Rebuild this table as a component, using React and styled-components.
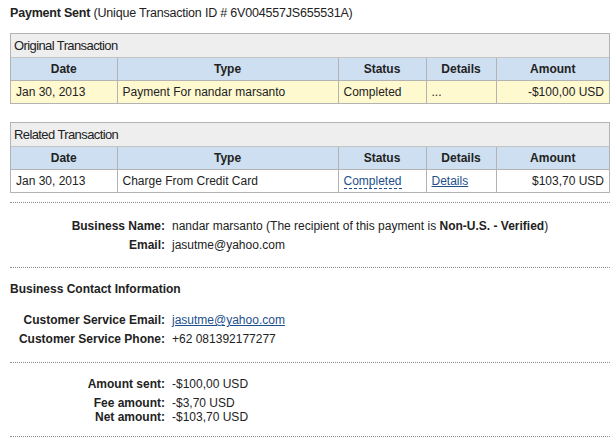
import React from "react";
import styled, { createGlobalStyle } from "styled-components";

const GlobalStyle = createGlobalStyle`
  body {
    margin: 0;
    background: #ffffff;
    font-family: "Liberation Sans", Arial, sans-serif;
    color: #222;
  }
`;

const Page = styled.div`
  width: 600px;
  padding: 6px 0 0 10px;
  font-size: 12px;
`;

const Title = styled.div`
  font-size: 12.5px;
  letter-spacing: -0.2px;
  line-height: 15px;
  height: 15px;
  margin-bottom: 12px;
  b {
    font-weight: bold;
  }
`;

const Box = styled.div`
  border: 1px solid #b3b3b3;
  margin-bottom: ${p => p.$gap || 0}px;
`;

const Caption = styled.div`
  background: #eeeeee;
  height: 23px;
  line-height: 23px;
  padding-left: 3px;
  font-size: 13px;
  letter-spacing: -0.6px;
  border-bottom: 1px solid #c4c4c4;
`;

const Table = styled.table`
  width: 100%;
  border-collapse: collapse;
  table-layout: fixed;
  font-size: 12px;
`;

const Th = styled.th`
  background: #cddff0;
  height: 22px;
  font-weight: bold;
  text-align: center;
  border-left: 1px solid #b3b3b3;
  border-bottom: 1px solid #b3b3b3;
  padding: 0;
  &:first-child {
    border-left: none;
  }
`;

const Td = styled.td`
  background: ${p => (p.$hl ? "#fff9d0" : "#ffffff")};
  height: 22px;
  padding: 0 5px;
  text-align: ${p => (p.$right ? "right" : "left")};
  border-left: 1px solid #b3b3b3;
  white-space: nowrap;
  &:first-child {
    border-left: none;
  }
`;

const Link = styled.a`
  color: #1c4f8c;
  text-decoration: underline;
`;

const StatusLink = styled.span`
  color: #1c4f8c;
  border-bottom: 1px dashed #1c4f8c;
`;

const Divider = styled.div`
  border-top: 1px dotted #8c8c8c;
  height: 0;
  margin: ${p => p.$m || "0"};
`;

const InfoGrid = styled.div`
  display: grid;
  grid-template-columns: 155px 1fr;
  column-gap: 7px;
  row-gap: ${p => p.$rowGap || 5}px;
  line-height: 14px;
  margin-top: ${p => p.$top || 0}px;
`;

const Label = styled.div`
  font-weight: bold;
  text-align: right;
  margin-top: ${p => p.$shift || 0}px;
`;

const Value = styled.div`
  margin-top: ${p => p.$shift || 0}px;
`;

const SectionTitle = styled.div`
  font-weight: bold;
  line-height: 14px;
`;

function TxTable({ title, row, highlight, gap }) {
  return (
    <Box $gap={gap}>
      <Caption>{title}</Caption>
      <Table>
        <colgroup>
          <col style={{ width: 106 }} />
          <col style={{ width: 221 }} />
          <col style={{ width: 88 }} />
          <col style={{ width: 70 }} />
          <col />
        </colgroup>
        <thead>
          <tr>
            <Th>Date</Th>
            <Th>Type</Th>
            <Th>Status</Th>
            <Th>Details</Th>
            <Th>Amount</Th>
          </tr>
        </thead>
        <tbody>
          <tr>
            <Td $hl={highlight}>{row.date}</Td>
            <Td $hl={highlight}>{row.type}</Td>
            <Td $hl={highlight}>{row.status}</Td>
            <Td $hl={highlight}>{row.details}</Td>
            <Td $hl={highlight} $right>
              {row.amount}
            </Td>
          </tr>
        </tbody>
      </Table>
    </Box>
  );
}

export default function App() {
  return (
    <>
      <GlobalStyle />
      <Page>
        <Title>
          <b>Payment Sent</b> (Unique Transaction ID # 6V004557JS655531A)
        </Title>
        <TxTable
          title="Original Transaction"
          highlight
          gap={18}
          row={{
            date: "Jan 30, 2013",
            type: "Payment For nandar marsanto",
            status: "Completed",
            details: "...",
            amount: "-$100,00 USD"
          }}
        />
        <TxTable
          title="Related Transaction"
          gap={9}
          row={{
            date: "Jan 30, 2013",
            type: "Charge From Credit Card",
            status: <StatusLink>Completed</StatusLink>,
            details: <Link>Details</Link>,
            amount: "$103,70 USD"
          }}
        />
        <Divider $m="0 0 16px 0" />
        <InfoGrid>
          <Label>Business Name:</Label>
          <Value>
            nandar marsanto (The recipient of this payment is{" "}
            <b>Non-U.S. - Verified</b>)
          </Value>
          <Label>Email:</Label>
          <Value>jasutme@yahoo.com</Value>
        </InfoGrid>
        <Divider $m="15px 0 14px 0" />
        <SectionTitle>Business Contact Information</SectionTitle>
        <InfoGrid $top={17}>
          <Label>Customer Service Email:</Label>
          <Value>
            <Link>jasutme@yahoo.com</Link>
          </Value>
          <Label>Customer Service Phone:</Label>
          <Value>+62 081392177277</Value>
        </InfoGrid>
        <Divider $m="16px 0 14px 0" />
        <InfoGrid $rowGap={3}>
          <Label>Amount sent:</Label>
          <Value>-$100,00 USD</Value>
          <Label $shift={2}>Fee amount:</Label>
          <Value $shift={2}>-$3,70 USD</Value>
          <Label $shift={-3}>Net amount:</Label>
          <Value $shift={-3}>-$103,70 USD</Value>
        </InfoGrid>
        <Divider $m="12px 0 0 0" />
      </Page>
    </>
  );
}
